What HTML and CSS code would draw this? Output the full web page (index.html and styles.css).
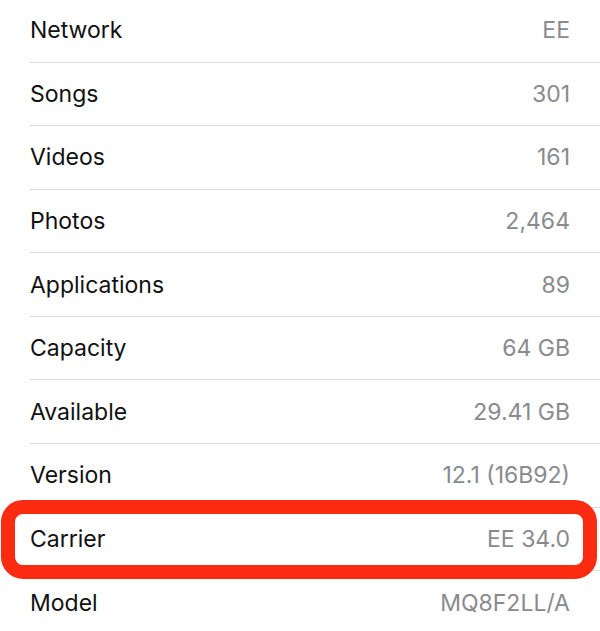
FILE: index.html
```html
<!DOCTYPE html>
<html>
<head>
<meta charset="utf-8">
<link rel="stylesheet" href="styles.css">
</head>
<body>
<ul class="list">
  <li class="row"><span class="label">Network</span><span class="value">EE</span></li>
  <li class="row"><span class="label">Songs</span><span class="value">301</span></li>
  <li class="row"><span class="label">Videos</span><span class="value">161</span></li>
  <li class="row"><span class="label">Photos</span><span class="value">2,464</span></li>
  <li class="row"><span class="label">Applications</span><span class="value">89</span></li>
  <li class="row"><span class="label">Capacity</span><span class="value">64 GB</span></li>
  <li class="row"><span class="label">Available</span><span class="value">29.41 GB</span></li>
  <li class="row"><span class="label">Version</span><span class="value">12.1 (16B92)</span></li>
  <li class="row highlight"><span class="label">Carrier</span><span class="value">EE 34.0</span></li>
  <li class="row"><span class="label">Model</span><span class="value">MQ8F2LL/A</span></li>
</ul>
</body>
</html>
```
FILE: styles.css
```css
html, body {
  margin: 0;
  padding: 0;
  background: #ffffff;
  overflow: hidden;
}
body {
  width: 600px;
  height: 631px;
  font-family: Inter, "Noto Sans", "Liberation Sans", sans-serif;
}
.list {
  list-style: none;
  margin: -1.1px 0 0 0;
  padding: 0 0 0 30px;
}
.row {
  position: relative;
  display: flex;
  align-items: center;
  justify-content: space-between;
  height: 62.6px;
  border-bottom: 1px solid #dcdcdc;
  padding-right: 30px;
  font-size: 23px;
}
.label {
  color: #111111;
}
.value {
  color: #8a8a8e;
}
.highlight::after {
  content: "";
  position: absolute;
  top: -8px;
  bottom: -9px;
  left: -29px;
  right: 3px;
  border: 14px solid #fa2b10;
  border-radius: 22px;
}
```
